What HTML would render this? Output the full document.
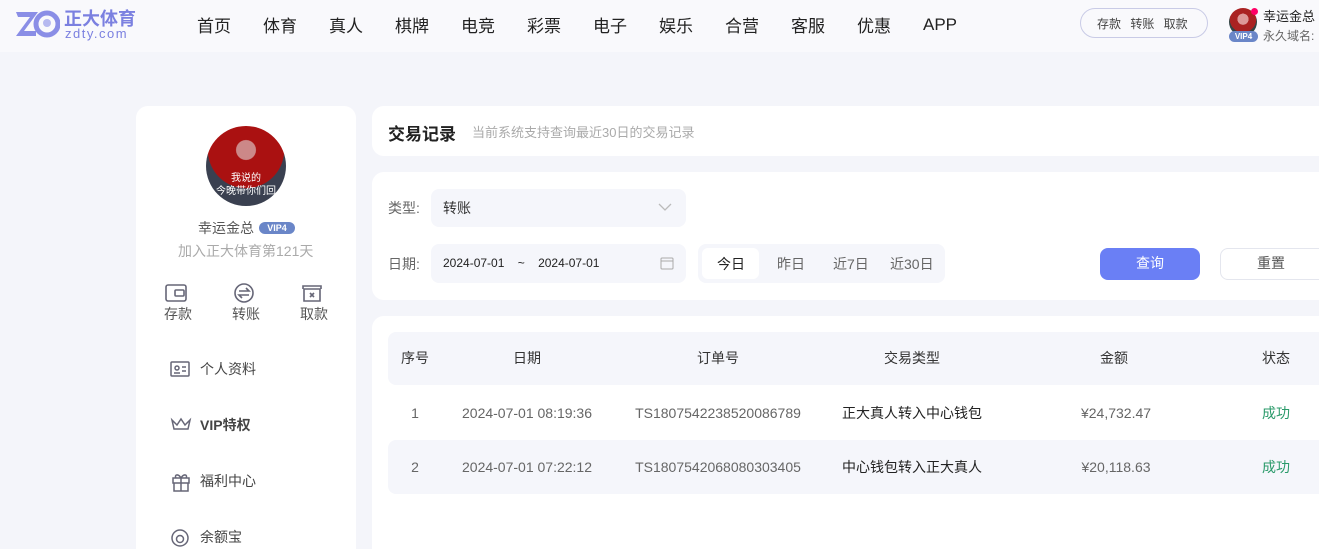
<!DOCTYPE html>
<html><head><meta charset="utf-8"><style>
*{margin:0;padding:0;box-sizing:border-box}
html,body{width:1319px;height:549px;overflow:hidden}
body{background:#f4f5fa;font-family:"Liberation Sans","Noto Sans CJK SC",sans-serif;position:relative;color:#333}
.abs{position:absolute}
.hdr{left:0;top:0;width:1319px;height:52px;background:#f9f9fc}
.nav span{position:absolute;top:12px;font-size:17px;color:#222}
.card{background:#fff;border-radius:12px;position:absolute}
.menu{position:absolute;left:200px;font-size:14px;color:#444}
.th,.td{position:absolute;font-size:14px;transform:translateX(-50%);white-space:nowrap}
.th{top:348px;color:#333}
</style></head><body>
<div class="abs hdr"></div>
<svg class="abs" style="left:14px;top:9px" width="46" height="30" viewBox="0 0 46 30"><path d="M2 3h22l-14 19h12v5H2l14-19H4z" fill="#8a8ee6"/><circle cx="33" cy="15" r="11" fill="none" stroke="#8a8ee6" stroke-width="5"/><circle cx="33" cy="14" r="4" fill="#b6b9f0"/></svg>
<div class="abs" style="left:64px;top:5px;font-size:18px;font-weight:bold;color:#7b80e0">正大体育</div>
<div class="abs" style="left:65px;top:26px;font-size:13px;color:#7b80e0;letter-spacing:1.5px">zdty.com</div>
<div class="nav"><span style="left:197px">首页</span><span style="left:263px">体育</span><span style="left:329px">真人</span><span style="left:395px">棋牌</span><span style="left:461px">电竞</span><span style="left:527px">彩票</span><span style="left:593px">电子</span><span style="left:659px">娱乐</span><span style="left:725px">合营</span><span style="left:791px">客服</span><span style="left:857px">优惠</span><span style="left:923px;top:15px">APP</span></div>
<div class="abs" style="left:1080px;top:8px;width:128px;height:30px;border:1px solid #c9cbe6;border-radius:15px;font-size:12px;color:#444;padding:6px 0 0 16px;word-spacing:6px">存款 转账 取款</div>
<div class="abs" style="left:1229px;top:8px;width:28px;height:28px;border-radius:50%;background:radial-gradient(circle at 50% 40%,#d99 0 25%,#a22 26% 60%,#344 61%)"></div>
<div class="abs" style="left:1251px;top:8px;width:7px;height:7px;border-radius:50%;background:#f06"></div>
<div class="abs" style="left:1229px;top:31px;width:29px;height:11px;border-radius:6px;background:#6a86c8;color:#fff;font-size:8px;font-weight:bold;text-align:center;line-height:11px">VIP4</div>
<div class="abs" style="left:1263px;top:6px;font-size:13px;color:#222">幸运金总</div>
<div class="abs" style="left:1263px;top:27px;font-size:12px;color:#666">永久域名:</div>

<div class="card" style="left:136px;top:106px;width:220px;height:460px"></div>
<div class="abs" style="left:206px;top:126px;width:80px;height:80px;border-radius:50%;background:radial-gradient(circle at 50% 30%,#c88 0 14%,#a11 15% 55%,#3a4050 56%)"></div>
<div class="abs" style="left:206px;top:172px;width:80px;text-align:center;color:#fff;font-size:10px;line-height:13px">我说的<br>今晚带你们回</div>
<div class="abs" style="left:198px;top:218px;font-size:14px;color:#555">幸运金总</div>
<div class="abs" style="left:259px;top:222px;width:36px;height:12px;border-radius:6px;background:#6a86c8;color:#fff;font-size:9px;font-weight:bold;text-align:center;line-height:12px">VIP4</div>
<div class="abs" style="left:178px;top:241px;font-size:14px;color:#aaa">加入正大体育第121天</div>
<svg class="abs" style="left:164px;top:283px" width="176" height="22" fill="none" stroke="#667" stroke-width="1.6"><rect x="2" y="2" width="20" height="16" rx="2"/><rect x="11" y="7" width="9" height="6" rx="1"/><circle cx="80" cy="10" r="9"/><path d="M75 8h10l-3-3M85 12H75l3 3"/><path d="M139 6V3h18v3M140 18V6h16v12z"/><path d="M146 10l4 4M150 10l-4 4"/></svg>
<div class="abs" style="left:164px;top:304px;font-size:14px;color:#555">存款</div>
<div class="abs" style="left:232px;top:304px;font-size:14px;color:#555">转账</div>
<div class="abs" style="left:300px;top:304px;font-size:14px;color:#555">取款</div>
<svg class="abs" style="left:169px;top:360px" width="24" height="189" fill="none" stroke="#667" stroke-width="1.5"><rect x="2" y="2" width="18" height="14" rx="1"/><circle cx="8" cy="8" r="2"/><path d="M5 13h6M13 7h4M13 11h4"/><path d="M3 60l5 5 4-6 4 6 5-5-2 9H5z"/><path d="M4 118h16v5H4zM5 123v8h14v-8M12 118v13M12 118c-3-5-7-3-5 0M12 118c3-5 7-3 5 0"/><circle cx="11" cy="178" r="8"/><circle cx="11" cy="179" r="3.5"/></svg>
<div class="menu" style="top:359px">个人资料</div>
<div class="menu" style="top:415px;font-weight:bold">VIP特权</div>
<div class="menu" style="top:471px">福利中心</div>
<div class="menu" style="top:527px">余额宝</div>

<div class="card" style="left:372px;top:106px;width:960px;height:50px"></div>
<div class="abs" style="left:388px;top:120px;font-size:17px;font-weight:bold;color:#222">交易记录</div>
<div class="abs" style="left:472px;top:122px;font-size:13px;color:#aaa">当前系统支持查询最近30日的交易记录</div>

<div class="card" style="left:372px;top:172px;width:960px;height:128px"></div>
<div class="abs" style="left:388px;top:198px;font-size:14px;color:#666">类型:</div>
<div class="abs" style="left:431px;top:189px;width:255px;height:38px;border-radius:8px;background:#f5f6fb"></div>
<div class="abs" style="left:443px;top:198px;font-size:14px;color:#333">转账</div>
<svg class="abs" style="left:658px;top:202px" width="14" height="10"><path d="M1 2l6 6 6-6" fill="none" stroke="#bbb" stroke-width="1.3"/></svg>
<div class="abs" style="left:388px;top:254px;font-size:14px;color:#666">日期:</div>
<div class="abs" style="left:431px;top:244px;width:255px;height:39px;border-radius:8px;background:#f5f6fb"></div>
<div class="abs" style="left:443px;top:256px;font-size:12px;color:#222;white-space:pre">2024-07-01    ~    2024-07-01</div>
<svg class="abs" style="left:660px;top:257px" width="14" height="13"><rect x="1" y="1" width="12" height="11" rx="1" fill="none" stroke="#aaa"/><path d="M1 4h12" stroke="#aaa"/></svg>
<div class="abs" style="left:698px;top:244px;width:247px;height:39px;border-radius:8px;background:#f5f6fb"></div>
<div class="abs" style="left:702px;top:248px;width:57px;height:31px;border-radius:6px;background:#fff"></div>
<div class="abs" style="left:717px;top:254px;font-size:14px;color:#222">今日</div>
<div class="abs" style="left:777px;top:254px;font-size:14px;color:#666">昨日</div>
<div class="abs" style="left:833px;top:254px;font-size:14px;color:#666">近7日</div>
<div class="abs" style="left:890px;top:254px;font-size:14px;color:#666">近30日</div>
<div class="abs" style="left:1100px;top:248px;width:100px;height:32px;border-radius:8px;background:#6a7ff5;color:#fff;font-size:14px;text-align:center;line-height:30px">查询</div>
<div class="abs" style="left:1220px;top:248px;width:110px;height:32px;border-radius:8px;border:1px solid #e4e6ee;background:#fff;color:#555;font-size:14px;padding-left:36px;line-height:28px">重置</div>

<div class="card" style="left:372px;top:316px;width:960px;height:233px;border-radius:12px 12px 0 0"></div>
<div class="abs" style="left:388px;top:332px;width:940px;height:53px;border-radius:8px;background:#f5f6fb"></div>
<div class="abs" style="left:388px;top:440px;width:940px;height:54px;border-radius:8px;background:#f5f6fb"></div>
<div class="th" style="left:415px">序号</div><div class="th" style="left:527px">日期</div><div class="th" style="left:718px">订单号</div><div class="th" style="left:912px">交易类型</div><div class="th" style="left:1114px">金额</div><div class="th" style="left:1276px">状态</div>
<div class="td" style="top:405px;left:415px;color:#666">1</div><div class="td" style="top:405px;left:527px;color:#666">2024-07-01 08:19:36</div><div class="td" style="top:405px;left:718px;color:#666">TS1807542238520086789</div><div class="td" style="top:403px;left:912px;color:#222">正大真人转入中心钱包</div><div class="td" style="top:405px;left:1116px;color:#666">¥24,732.47</div><div class="td" style="top:403px;left:1276px;color:#2a9a6a">成功</div>
<div class="td" style="top:459px;left:415px;color:#666">2</div><div class="td" style="top:459px;left:527px;color:#666">2024-07-01 07:22:12</div><div class="td" style="top:459px;left:718px;color:#666">TS1807542068080303405</div><div class="td" style="top:457px;left:912px;color:#222">中心钱包转入正大真人</div><div class="td" style="top:459px;left:1116px;color:#666">¥20,118.63</div><div class="td" style="top:457px;left:1276px;color:#2a9a6a">成功</div>
</body></html>
